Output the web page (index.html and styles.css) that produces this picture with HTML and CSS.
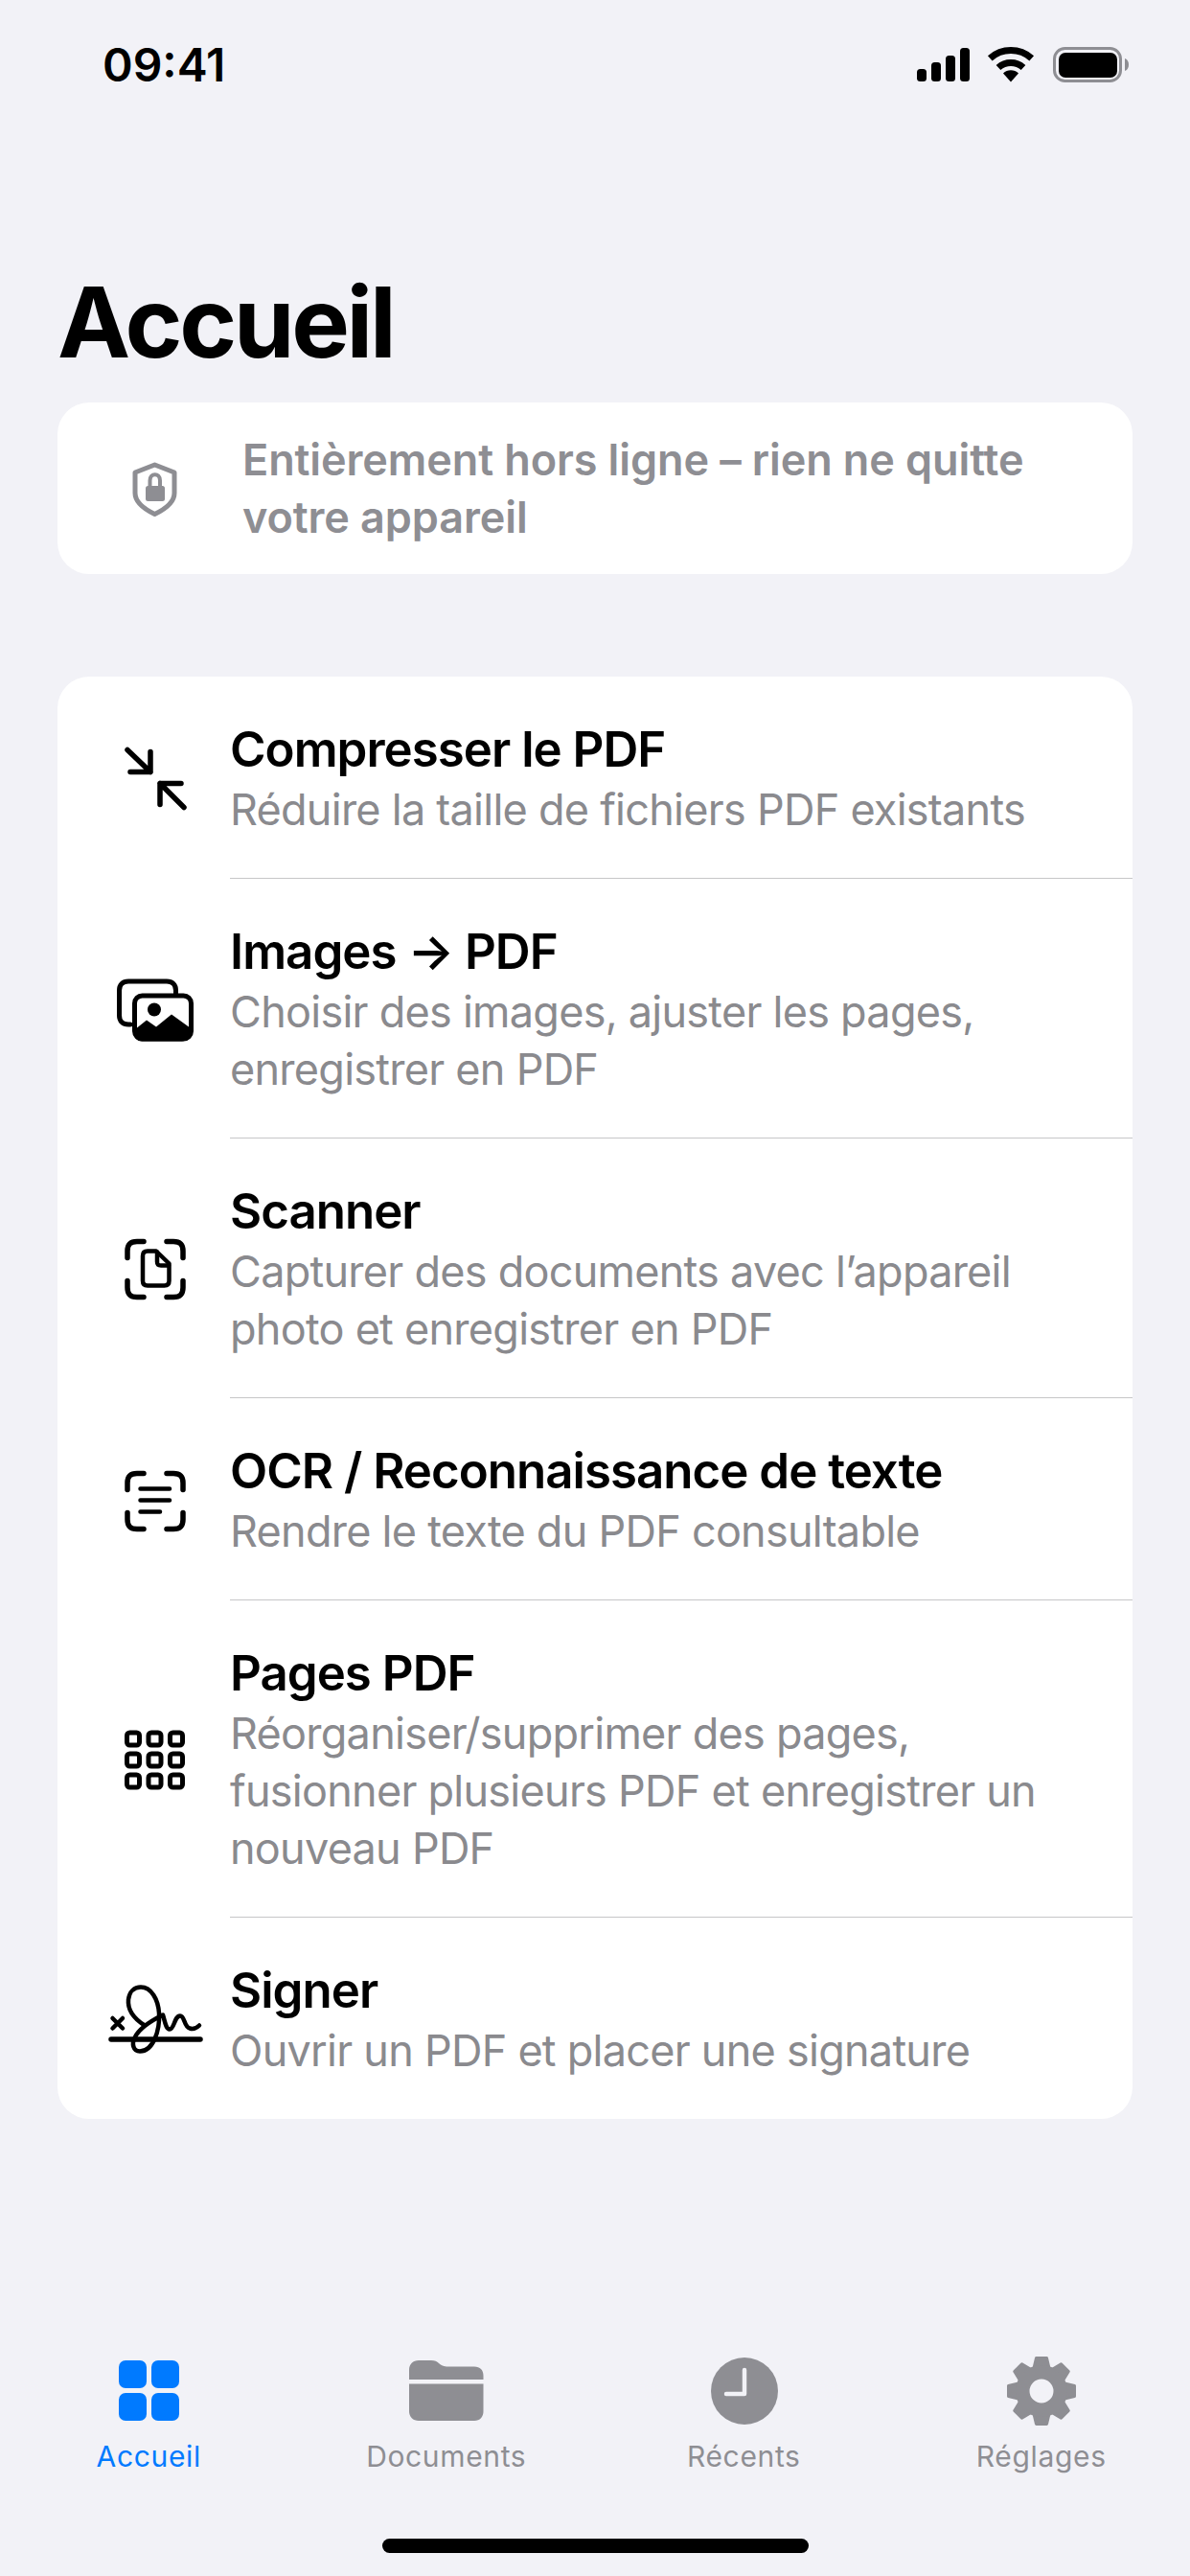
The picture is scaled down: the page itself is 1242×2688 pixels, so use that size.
FILE: index.html
```html
<!DOCTYPE html>
<html lang="fr">
<head>
<meta charset="utf-8">
<title>Accueil</title>
<link rel="stylesheet" href="styles.css">
</head>
<body>
<div class="screen">
  <header class="status">
    <span class="time">09:41</span>
    <svg class="status-icons" width="222" height="40" viewBox="957 48 222 40">
      <rect x="957" y="72" width="10" height="13" rx="3.5"/>
      <rect x="972" y="65" width="10" height="20" rx="3.5"/>
      <rect x="987" y="58" width="10" height="27" rx="3.5"/>
      <rect x="1002" y="50" width="10" height="35" rx="3.5"/>
      <path class="wifi" d="M1033.3 60.8A32.5 32.5 0 0 1 1076.7 60.8"/>
      <path class="wifi" d="M1042 70.5A19.5 19.5 0 0 1 1068 70.5"/>
      <path d="M1055 85.5L1047 76.5A11.5 11.5 0 0 1 1063 76.5Z"/>
      <rect class="batt" x="1100.5" y="50.5" width="69" height="34" rx="11"/>
      <rect x="1105" y="55" width="61" height="26" rx="7"/>
      <path class="nub" d="M1174 61C1177 62 1178 65 1178 67.5C1178 70 1177 73 1174 74Z"/>
    </svg>
  </header>

  <h1 class="title">Accueil</h1>

  <section class="banner">
    <svg class="banner-icon" width="100" height="100" viewBox="112 459.5 100 100">
      <path class="shield" d="M161.500 484.500L182 492.500V514C182 522 174 530 161.500 536C149 530 141 522 141 514V492.500Z"/>
      <path class="shackle" d="M156.500 508V501C156.500 492.500 167 492.500 167 501V508"/>
      <rect class="lock" x="152" y="506.500" width="20" height="16" rx="2.500"/>
    </svg>
    <p class="banner-text">Entièrement hors ligne – rien ne quitte votre appareil</p>
  </section>

  <section class="list">
    <article class="row">
      <div class="row-icon">
        <svg width="110" height="110" viewBox="107 756.5 110 110">
          <path class="ink" d="M133 782L157 805M136 805H157V784"/>
          <path class="ink" d="M192 842L167 817M189 817H167V839"/>
        </svg>
      </div>
      <div class="row-body">
        <h2 class="row-title">Compresser le PDF</h2>
        <p class="row-sub">Réduire la taille de fichiers PDF existants</p>
      </div>
    </article>

    <article class="row">
      <div class="row-icon">
        <svg width="110" height="110" viewBox="107 997.5 110 110">
          <path class="ink-5" d="M136 1068.500H134C128 1068.500 124.500 1065 124.500 1059V1033C124.500 1027 128 1023.500 134 1023.500H174C180 1023.500 183.500 1027 183.500 1033V1037"/>
          <rect class="ink-5" x="140.500" y="1038.500" width="59" height="45" rx="8"/>
          <circle class="fill" cx="161" cy="1053" r="7"/>
          <path class="fill" d="M143 1072L153 1064L163 1071L179 1058L197 1071V1078C197 1083 194 1086 190 1086H148C144 1086 140 1083 140 1078V1074Z"/>
        </svg>
      </div>
      <div class="row-body">
        <h2 class="row-title">Images → PDF</h2>
        <p class="row-sub">Choisir des images, ajuster les pages, enregistrer en PDF</p>
      </div>
    </article>

    <article class="row">
      <div class="row-icon">
        <svg width="110" height="110" viewBox="107 1268.5 110 110">
          <path class="ink" d="M150 1295H143C136 1295 133 1298 133 1305V1312M174 1295H181C188 1295 191 1298 191 1305V1312M133 1336V1343C133 1350 136 1353 143 1353H150M191 1336V1343C191 1350 188 1353 181 1353H174"/>
          <path class="ink-4" d="M154 1305H163L176.500 1318V1336C176.500 1339.500 175 1341 171.500 1341H154C150.500 1341 149 1339.500 149 1336V1310C149 1306.500 150.500 1305 154 1305Z"/>
          <path class="ink-4" d="M164 1306V1316C164 1319 165 1320 168 1320H176"/>
        </svg>
      </div>
      <div class="row-body">
        <h2 class="row-title">Scanner</h2>
        <p class="row-sub">Capturer des documents avec l’appareil photo et enregistrer en PDF</p>
      </div>
    </article>

    <article class="row">
      <div class="row-icon">
        <svg width="110" height="110" viewBox="107 1509.5 110 110">
          <path class="ink" d="M150 1537H143C136 1537 133 1540 133 1547V1554M174 1537H181C188 1537 191 1540 191 1547V1554M133 1578V1585C133 1592 136 1595 143 1595H150M191 1578V1585C191 1592 188 1595 181 1595H174"/>
          <path class="ink-4" d="M146.500 1553H177M146.500 1565H177M146.500 1577H167"/>
        </svg>
      </div>
      <div class="row-body">
        <h2 class="row-title">OCR / Reconnaissance de texte</h2>
        <p class="row-sub">Rendre le texte du PDF consultable</p>
      </div>
    </article>

    <article class="row">
      <div class="row-icon">
        <svg width="110" height="110" viewBox="107 1780.5 110 110">
          <rect class="ink-5" x="132.500" y="1807.500" width="13" height="13" rx="3"/>
          <rect class="ink-5" x="155" y="1807.500" width="13" height="13" rx="3"/>
          <rect class="ink-5" x="177.500" y="1807.500" width="13" height="13" rx="3"/>
          <rect class="ink-5" x="132.500" y="1829.500" width="13" height="13" rx="3"/>
          <rect class="ink-5" x="155" y="1829.500" width="13" height="13" rx="3"/>
          <rect class="ink-5" x="177.500" y="1829.500" width="13" height="13" rx="3"/>
          <rect class="ink-5" x="132.500" y="1851.500" width="13" height="13" rx="3"/>
          <rect class="ink-5" x="155" y="1851.500" width="13" height="13" rx="3"/>
          <rect class="ink-5" x="177.500" y="1851.500" width="13" height="13" rx="3"/>
        </svg>
      </div>
      <div class="row-body">
        <h2 class="row-title">Pages PDF</h2>
        <p class="row-sub">Réorganiser/supprimer des pages, fusionner plusieurs PDF et enregistrer un nouveau PDF</p>
      </div>
    </article>

    <article class="row row-last">
      <div class="row-icon">
        <svg width="110" height="110" viewBox="107 2050.5 110 110">
          <path class="ink-4" d="M117.500 2105.500L128 2116M128 2105.500L117.500 2116"/>
          <path class="ink-4" d="M151 2113C140 2106 133 2097 134 2086C135 2078 140 2073 147 2073C158 2073 165 2086 166 2100C167 2118 160 2140 146 2140C139 2140 137 2132 141 2125C146 2115 158 2108 170 2102C172 2108 173 2117 177 2117C182 2117 182 2103 188 2103C193 2103 192 2115 198 2116C201 2117 205 2116 208 2113"/>
          <path class="ink" d="M116 2127.500H209"/>
        </svg>
      </div>
      <div class="row-body">
        <h2 class="row-title">Signer</h2>
        <p class="row-sub">Ouvrir un PDF et placer une signature</p>
      </div>
    </article>
  </section>

  <nav class="tabs">
    <div class="tab tab-active">
      <svg class="tab-icon" width="90" height="84" viewBox="110 2453 90 84">
        <rect class="tab-fill" x="124" y="2463" width="29" height="29" rx="7"/>
        <rect class="tab-fill" x="158" y="2463" width="29" height="29" rx="7"/>
        <rect class="tab-fill" x="124" y="2497" width="29" height="29" rx="7"/>
        <rect class="tab-fill" x="158" y="2497" width="29" height="29" rx="7"/>
      </svg>
      <span class="tab-label">Accueil</span>
    </div>
    <div class="tab">
      <svg class="tab-icon" width="90" height="84" viewBox="420 2453 90 84">
        <path class="tab-fill" d="M426 2483V2473C426 2467 430 2463 436 2463H449C453 2463 455 2464 457 2466C459 2468 461 2469 465 2469.500H494C500 2469.500 503.500 2473 503.500 2479V2483Z"/>
        <path class="tab-fill" d="M426 2487.500H503.500V2516C503.500 2522 500 2526 494 2526H436C430 2526 426 2522 426 2516Z"/>
      </svg>
      <span class="tab-label">Documents</span>
    </div>
    <div class="tab">
      <svg class="tab-icon" width="90" height="84" viewBox="731 2453 90 84">
        <circle class="tab-fill" cx="777" cy="2495" r="35"/>
        <path class="clock-hand" d="M777 2473V2498H758"/>
      </svg>
      <span class="tab-label">Récents</span>
    </div>
    <div class="tab">
      <svg class="tab-icon" width="90" height="84" viewBox="1042 2453 90 84">
        <g class="gear" transform="translate(1087 2495)">
          <g>
            <path id="tooth" class="tooth" d="M-5.500 -34.500H5.500L8 -24H-8Z"/>
            <use href="#tooth" transform="rotate(45)"/>
            <use href="#tooth" transform="rotate(90)"/>
            <use href="#tooth" transform="rotate(135)"/>
            <use href="#tooth" transform="rotate(180)"/>
            <use href="#tooth" transform="rotate(225)"/>
            <use href="#tooth" transform="rotate(270)"/>
            <use href="#tooth" transform="rotate(315)"/>
          </g>
          <path class="gear-ring" fill-rule="evenodd" d="M0 -27A27 27 0 1 1 0 27A27 27 0 1 1 0 -27ZM0 -12.500A12.500 12.500 0 1 0 0 12.500A12.500 12.500 0 1 0 0 -12.500Z"/>
        </g>
      </svg>
      <span class="tab-label">Réglages</span>
    </div>
  </nav>
  <div class="home-bar"></div>
</div>
</body>
</html>
```
FILE: styles.css
```css
* { box-sizing: border-box; }
html, body { margin: 0; padding: 0; }
body { background: #f2f2f7; font-family: Inter, "Liberation Sans", sans-serif; color: #000; }
h1, h2, p { margin: 0; }

.screen { width: 1242px; height: 2688px; display: flex; flex-direction: column; }

.status { height: 132px; padding: 0 63px 0 107px; display: flex; justify-content: space-between; align-items: flex-start; flex: none; }
.time { font-size: 48px; font-weight: 600; line-height: 57px; margin-top: 39px; }
.status-icons { margin-top: 48px; }
.wifi { fill: none; stroke: #000; stroke-width: 7; }
.batt { fill: none; stroke: #8e8e93; stroke-width: 3; }
.nub { fill: #8e8e93; }

.title { font-size: 102px; font-weight: 700; line-height: 120px; letter-spacing: -3.300px; margin: 144px 0 0 60px; height: 144px; }

.banner { margin: 0 60px; height: 179px; background: #fff; border-radius: 33px; display: flex; align-items: center; flex: none; }
.banner-icon { margin-left: 52px; flex: none; }
.banner-text { margin-left: 41px; width: 860px; font-size: 45px; font-weight: 560; line-height: 60px; color: #8e8e93; letter-spacing: -0.100px; }
.shield { fill: none; stroke: #8e8e93; stroke-width: 5; stroke-linejoin: round; }
.shackle { fill: none; stroke: #8e8e93; stroke-width: 4; }
.lock { fill: #8e8e93; }

.list { margin: 107px 60px 0; background: #fff; border-radius: 33px; overflow: hidden; flex: none; }
.row { display: flex; }
.row-icon { width: 180px; flex: none; display: flex; align-items: center; justify-content: center; padding-left: 24px; }
.row-body { flex: 1; padding: 43px 40px 41px 0; border-bottom: 1px solid #c6c6c8; }
.row-last .row-body { border-bottom: 0; padding-bottom: 41px; }
.row-title { font-size: 51px; font-weight: 560; line-height: 66px; letter-spacing: -0.980px; }
.row-sub { font-size: 45px; font-weight: 400; line-height: 60px; color: #8a8a8e; letter-spacing: -0.740px; }

.ink, .ink-5, .ink-4 { fill: none; stroke: #000; stroke-linecap: round; stroke-linejoin: round; }
.ink { stroke-width: 5.500; }
.ink-5 { stroke-width: 5; }
.ink-4 { stroke-width: 4.500; }
.fill { fill: #000; }

.tabs { margin-top: auto; display: grid; grid-template-columns: repeat(4, 1fr); flex: none; }
.tab { display: flex; flex-direction: column; align-items: center; color: #8e8e93; }
.tab-icon { display: block; }
.tab-fill, .tooth, .gear-ring { fill: #8e8e93; }
.tooth { stroke: #8e8e93; stroke-width: 3; stroke-linejoin: round; }
.tab-active { color: #007aff; }
.tab-active .tab-fill { fill: #007aff; }
.clock-hand { fill: none; stroke: #f2f2f7; stroke-width: 4.500; stroke-linecap: round; stroke-linejoin: round; }
.tab-label { font-size: 30px; font-weight: 400; line-height: 36px; letter-spacing: 0.650px; margin-top: 8px; }

.home-bar { width: 445px; height: 15px; border-radius: 8px; background: #000; margin: 68px auto 24px; flex: none; }
```
